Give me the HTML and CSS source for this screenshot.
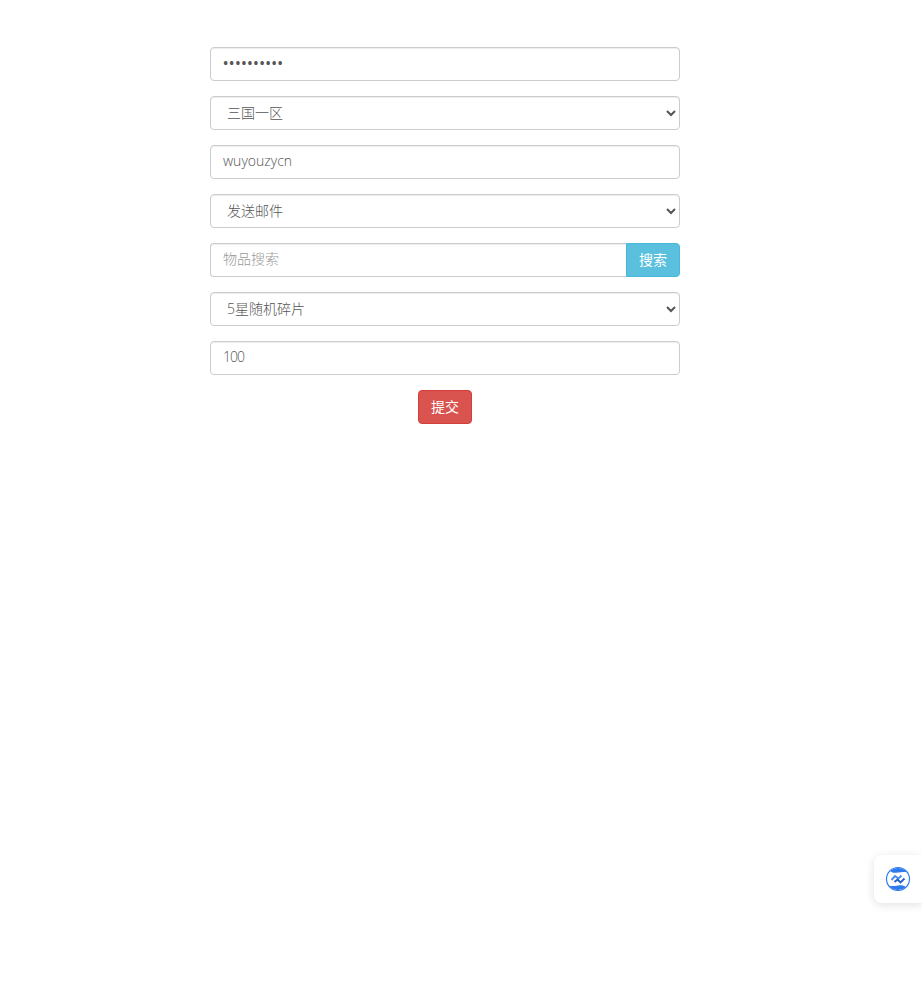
FILE: index.html
```html
<!DOCTYPE html>
<html lang="zh-CN">
<head>
<meta charset="utf-8">
<title>表单</title>
<link rel="stylesheet" href="styles.css">
</head>
<body>
<form class="panel">
  <input class="field input secret" type="password" value="1234567890">
  <select class="field choice"><option>三国一区</option></select>
  <input class="field input" type="text" value="wuyouzycn">
  <select class="field choice"><option>发送邮件</option></select>
  <div class="group">
    <input class="field input group-input" type="text" placeholder="物品搜索">
    <button class="btn btn-info" type="button">搜索</button>
  </div>
  <select class="field choice"><option>5星随机碎片</option></select>
  <input class="field input digits" type="text" value="100">
  <div class="actions"><button class="btn btn-danger" type="button">提交</button></div>
</form>
<aside class="widget">
  <svg class="widget-icon" width="26" height="26" viewBox="0 0 26 26" fill="none">
    <circle cx="13" cy="13" r="11.500" stroke="#2f7bee" stroke-width="1.200"/>
    <path d="M5 5A11.500 11.500 0 0 1 22 6.500C19 5.500 16 6.200 13 6.600C10 7 7 6.800 5 5Z" fill="#2f7bee"/>
    <path d="M21 21A11.500 11.500 0 0 1 4 19.500C7 20.500 10 19.800 13 19.400C16 19 19 19.200 21 21Z" fill="#2f7bee"/>
    <path d="M6.500 14L10 10L13.500 12.500L16.500 9.500" stroke="#4a8df0" stroke-width="1.900"/>
    <path d="M9.500 16L12.500 13.500L15.500 16.500L19.500 12.500" stroke="#2360c4" stroke-width="1.900"/>
  </svg>
</aside>
</body>
</html>
```
FILE: styles.css
```css
* { box-sizing: border-box; }
html, body { height: 100%; }
body {
  margin: 0;
  padding: 47px 0 0 210px;
  background: #fff;
  color: #555;
  font-family: "Open Sans", "Noto Sans CJK SC", sans-serif;
  font-size: 14px;
  font-weight: 300;
  overflow: hidden;
}
.panel {
  width: 470px;
  display: flex;
  flex-direction: column;
  gap: 15px;
}
.field {
  display: block;
  width: 100%;
  height: 34px;
  background: #fff;
  border: 1px solid #ccc;
  border-radius: 4px;
  box-shadow: inset 0 1px 1px rgba(0, 0, 0, .075);
  color: #555;
  font: inherit;
  outline: none;
}
.input { padding: 4px 12px 8px; }
.choice { padding: 5px 12px 7px; }
.secret { font-weight: 600; letter-spacing: .8px; }
.digits { letter-spacing: -1px; }
.field::placeholder { color: #999; opacity: 1; }
.group { display: flex; }
.group-input {
  flex: 1;
  min-width: 0;
  border-right: 0;
  border-radius: 4px 0 0 4px;
}
.btn {
  height: 34px;
  padding: 5px 12px 7px;
  border: 1px solid transparent;
  border-radius: 4px;
  color: #fff;
  font: inherit;
  font-weight: 400;
}
.btn-info {
  width: 54px;
  background: #5bc0de;
  border-color: #46b8da;
  border-radius: 0 4px 4px 0;
}
.btn-danger {
  width: 54px;
  background: #d9534f;
  border-color: #d43f3a;
}
.actions { display: flex; justify-content: center; }
.widget {
  position: fixed;
  right: 0;
  top: 855px;
  width: 48px;
  height: 48px;
  display: flex;
  align-items: center;
  justify-content: center;
  background: #fff;
  border-radius: 8px 0 0 8px;
  box-shadow: 0 2px 10px rgba(0, 0, 0, .12);
}
```
